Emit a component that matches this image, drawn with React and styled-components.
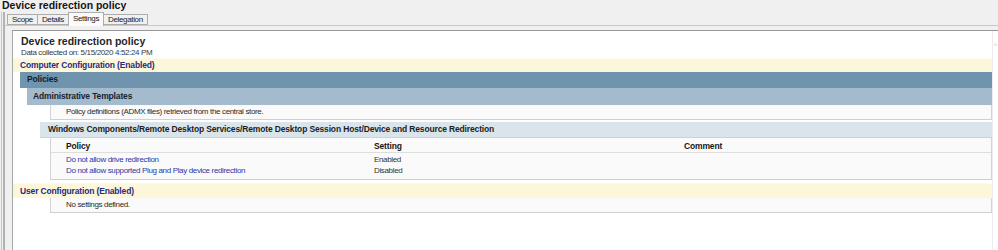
import React from 'react';
import styled, { createGlobalStyle } from 'styled-components';

const GlobalStyle = createGlobalStyle`
  html, body {
    margin: 0;
    padding: 0;
    background: #f0f0f0;
  }
  body {
    font-family: "Liberation Sans", Arial, sans-serif;
    overflow: hidden;
  }
`;

const Window = styled.div`
  height: 250px;
  display: flex;
  flex-direction: column;
  overflow: hidden;
`;

const WindowTitle = styled.div`
  margin-top: -1px;
  padding-left: 2px;
  height: 13px;
  line-height: 12px;
  font-size: 10.5px;
  font-weight: bold;
  color: #151515;
`;

const Body = styled.div`
  flex: 1;
  display: flex;
  flex-direction: column;
  margin-left: 1px;
  border-left: 1px solid #c6c6c6;
  min-height: 0;
`;

const Pane = styled.div`
  flex: 1;
  display: flex;
  flex-direction: column;
  margin-left: 1px;
  border-left: 2px solid #b2b2b2;
  min-height: 0;
`;

const TabStrip = styled.div`
  display: flex;
  align-items: flex-end;
  height: 13px;
  padding-left: 3px;
  position: relative;
  z-index: 1;
`;

const Tab = styled.div`
  box-sizing: border-box;
  height: ${p => (p.$active ? 14 : 11)}px;
  margin-left: -1px;
  margin-bottom: ${p => (p.$active ? -1 : 0)}px;
  padding: ${p => (p.$active ? '1px 4px 0' : '0 4px')};
  border: 1px solid #adadad;
  border-bottom: ${p => (p.$active ? 'none' : '1px solid #adadad')};
  background: ${p => (p.$active ? '#fbfbfb' : '#f0f0f0')};
  font-size: 8px;
  letter-spacing: -0.35px;
  line-height: 9px;
  color: #222;
  white-space: nowrap;
`;

const TabPanel = styled.div`
  flex: 1;
  display: flex;
  flex-direction: column;
  border-top: 1px solid #c9c9c9;
  padding: 4px 0 0 7px;
  min-height: 0;
`;

const ContentBox = styled.div`
  flex: 1;
  display: flex;
  background: #fff;
  border-top: 1px solid #979797;
  border-left: 1px solid #a8a8a8;
  min-height: 0;
`;

const Report = styled.div`
  flex: 1;
  display: flex;
  flex-direction: column;
  min-width: 0;
`;

const ScrollTrack = styled.div`
  width: 5px;
  display: flex;
  flex-direction: column;
  align-items: center;
  padding-top: 12px;
  color: #c4c4c4;
  font-size: 7px;
  line-height: 6px;
  border-left: 1px solid #ececec;
`;

const ReportHead = styled.div`
  padding: 3px 0 1px 8px;
`;

const ReportTitle = styled.div`
  font-size: 10.5px;
  font-weight: bold;
  line-height: 14px;
  color: #262626;
`;

const Collected = styled.div`
  font-size: 8px;
  letter-spacing: -0.35px;
  line-height: 9px;
  color: #3a3a3a;
`;

const ConfigHeader = styled.div`
  margin-top: ${p => p.$gap || 0}px;
  height: ${p => p.$height || 13}px;
  line-height: ${p => p.$height || 13}px;
  padding-left: 7px;
  background: #fcf6da;
  border-top: 1px solid #fffbea;
  font-size: 8.5px;
  font-weight: bold;
  letter-spacing: -0.15px;
  color: #2a2a80;
`;

const levels = {
  1: { indent: 7, pad: 7, bg: '#7194ae', color: '#0f1d2a', height: 15, gap: 0 },
  2: { indent: 14, pad: 6, bg: '#a4bacd', color: '#17232f', height: 16, gap: 0 },
  3: { indent: 27, pad: 8, bg: '#d9e4eb', color: '#1d1d1d', height: 15, gap: 2 },
};

const CategoryBar = styled.div`
  margin-left: ${p => levels[p.$level].indent}px;
  margin-top: ${p => levels[p.$level].gap}px;
  height: ${p => levels[p.$level].height}px;
  line-height: ${p => levels[p.$level].height}px;
  padding-left: ${p => levels[p.$level].pad}px;
  background: ${p => levels[p.$level].bg};
  border-bottom: 1px solid ${p => (p.$level === 3 ? '#c8d3db' : 'transparent')};
  font-size: 8.5px;
  font-weight: bold;
  letter-spacing: -0.15px;
  color: ${p => levels[p.$level].color};
  white-space: nowrap;
`;

const InfoRow = styled.div`
  margin-left: 37px;
  height: 14px;
  line-height: 14px;
  padding-left: 15px;
  background: #fafafa;
  border-left: 1px solid #d4d4d4;
  border-right: 1px solid #d4d4d4;
  border-bottom: 1px solid #d0d0d0;
  font-size: 8px;
  letter-spacing: -0.35px;
  color: #2a2a2a;
`;

const PolicyTable = styled.div`
  margin-left: 37px;
  padding: 3px 0 3px 15px;
  background: #fafafa;
  border-left: 1px solid #d4d4d4;
  border-right: 1px solid #d4d4d4;
  border-bottom: 1px solid #cdcdcd;
  display: grid;
  grid-template-columns: 308px 310px 1fr;
  font-size: 8px;
  letter-spacing: -0.35px;
`;

const HeadCell = styled.div`
  height: 11px;
  line-height: 11px;
  font-size: 8.5px;
  font-weight: bold;
  letter-spacing: -0.15px;
  color: #161616;
`;

const HeadRule = styled.div`
  grid-column: 1 / -1;
  height: 0;
  margin-left: -15px;
  border-top: 1px solid #dedede;
  margin-bottom: 1px;
`;

const Cell = styled.div`
  height: 11px;
  line-height: 11px;
  color: ${p => (p.$link ? '#2d36a8' : '#333')};
  white-space: nowrap;
`;

const rows = [
  ['Do not allow drive redirection', 'Enabled', ''],
  ['Do not allow supported Plug and Play device redirection', 'Disabled', ''],
];

export default function App() {
  return (
    <>
      <GlobalStyle />
      <Window>
        <WindowTitle>Device redirection policy</WindowTitle>
        <Body>
          <Pane>
            <TabStrip>
              <Tab>Scope</Tab>
              <Tab>Details</Tab>
              <Tab $active>Settings</Tab>
              <Tab>Delegation</Tab>
            </TabStrip>
            <TabPanel>
              <ContentBox>
                <Report>
                  <ReportHead>
                    <ReportTitle>Device redirection policy</ReportTitle>
                    <Collected>Data collected on: 5/15/2020 4:52:24 PM</Collected>
                  </ReportHead>
                  <ConfigHeader>Computer Configuration (Enabled)</ConfigHeader>
                  <CategoryBar $level={1}>Policies</CategoryBar>
                  <CategoryBar $level={2}>Administrative Templates</CategoryBar>
                  <InfoRow>Policy definitions (ADMX files) retrieved from the central store.</InfoRow>
                  <CategoryBar $level={3}>
                    Windows Components/Remote Desktop Services/Remote Desktop Session Host/Device and Resource Redirection
                  </CategoryBar>
                  <PolicyTable>
                    <HeadCell>Policy</HeadCell>
                    <HeadCell>Setting</HeadCell>
                    <HeadCell>Comment</HeadCell>
                    <HeadRule />
                    {rows.map(([name, setting, comment]) => (
                      <React.Fragment key={name}>
                        <Cell $link>{name}</Cell>
                        <Cell>{setting}</Cell>
                        <Cell>{comment}</Cell>
                      </React.Fragment>
                    ))}
                  </PolicyTable>
                  <ConfigHeader $gap={3} $height={14}>User Configuration (Enabled)</ConfigHeader>
                  <InfoRow>No settings defined.</InfoRow>
                </Report>
                <ScrollTrack>^</ScrollTrack>
              </ContentBox>
            </TabPanel>
          </Pane>
        </Body>
      </Window>
    </>
  );
}
